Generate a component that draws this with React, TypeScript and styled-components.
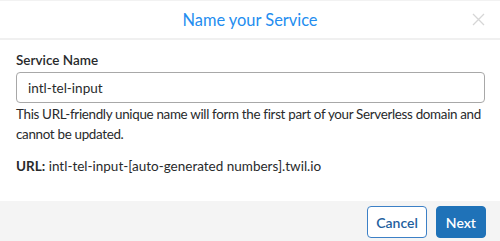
import React, { useState } from 'react';
import styled, { createGlobalStyle } from 'styled-components';

const GlobalStyle = createGlobalStyle`
  html, body {
    margin: 0;
    padding: 0;
    background: #ffffff;
  }
  body {
    font-family: Lato, "Open Sans", sans-serif;
    color: #282a2b;
  }
`;

const Modal = styled.div`
  width: 500px;
  height: 241px;
  display: flex;
  flex-direction: column;
  background: #ffffff;
  border-top: 1px solid #f2f2f2;
  box-sizing: border-box;
`;

const Header = styled.header`
  height: 37px;
  display: flex;
  align-items: center;
  justify-content: center;
  position: relative;
  border-bottom: 2px solid #f0f0f0;
`;

const Title = styled.h2`
  margin: 0;
  font-size: 16.4px;
  font-weight: 400;
  color: #238def;
`;

const CloseButton = styled.button`
  position: absolute;
  right: 15px;
  top: 12px;
  width: 13px;
  height: 13px;
  padding: 0;
  border: none;
  background: none;
  cursor: pointer;
`;

const Body = styled.div`
  flex: 1;
  padding: 12px 15px 0 16px;
`;

const Label = styled.label`
  display: block;
  font-size: 13.5px;
  line-height: 16px;
  font-weight: 600;
  color: #282a2b;
  margin-bottom: 4px;
`;

const TextInput = styled.input`
  display: block;
  width: 100%;
  box-sizing: border-box;
  height: 31px;
  padding: 0 11px;
  border: 1px solid #a8a8a8;
  border-radius: 4px;
  font-family: Lato, "Open Sans", sans-serif;
  font-size: 13.5px;
  color: #282a2b;
  outline: none;
`;

const Help = styled.p`
  margin: 1px 0 0 0;
  font-size: 13.4px;
  line-height: 20px;
  letter-spacing: -0.32px;
  color: #282a2b;
`;

const UrlLine = styled.p`
  margin: 14px 0 0 0;
  font-size: 13.5px;
  line-height: 16px;
  color: #282a2b;
`;

const Footer = styled.footer`
  height: 40px;
  background: #f4f4f4;
  display: flex;
  justify-content: flex-end;
  align-items: flex-start;
  gap: 9px;
  padding: 5px 14px 0 0;
  box-sizing: border-box;
`;

const Button = styled.button<{ $primary?: boolean }>`
  height: 32px;
  padding: 0 ${(p) => (p.$primary ? '9px' : '8px')};
  border-radius: 4px;
  font-family: Lato, "Open Sans", sans-serif;
  font-size: 14px;
  font-weight: 600;
  cursor: pointer;
  border: 1px solid ${(p) => (p.$primary ? '#1f72b8' : '#3c80c6')};
  background: ${(p) => (p.$primary ? '#1f72b8' : '#ffffff')};
  color: ${(p) => (p.$primary ? '#ffffff' : '#1f5f9e')};
`;

export default function App() {
  const [name, setName] = useState('intl-tel-input');

  return (
    <>
      <GlobalStyle />
      <Modal>
        <Header>
          <Title>Name your Service</Title>
          <CloseButton aria-label="Close">
            <svg width="13" height="13" viewBox="0 0 13 13">
              <path d="M1 1 L12 12 M12 1 L1 12" stroke="#d6d6d6" strokeWidth="1.3" />
            </svg>
          </CloseButton>
        </Header>
        <Body>
          <Label>Service Name</Label>
          <TextInput value={name} onChange={(e) => setName(e.target.value)} />
          <Help>
            This URL-friendly unique name will form the first part of your Serverless domain and
            cannot be updated.
          </Help>
          <UrlLine>
            <b>URL:</b> {name}-[auto-generated numbers].twil.io
          </UrlLine>
        </Body>
        <Footer>
          <Button>Cancel</Button>
          <Button $primary>Next</Button>
        </Footer>
      </Modal>
    </>
  );
}
